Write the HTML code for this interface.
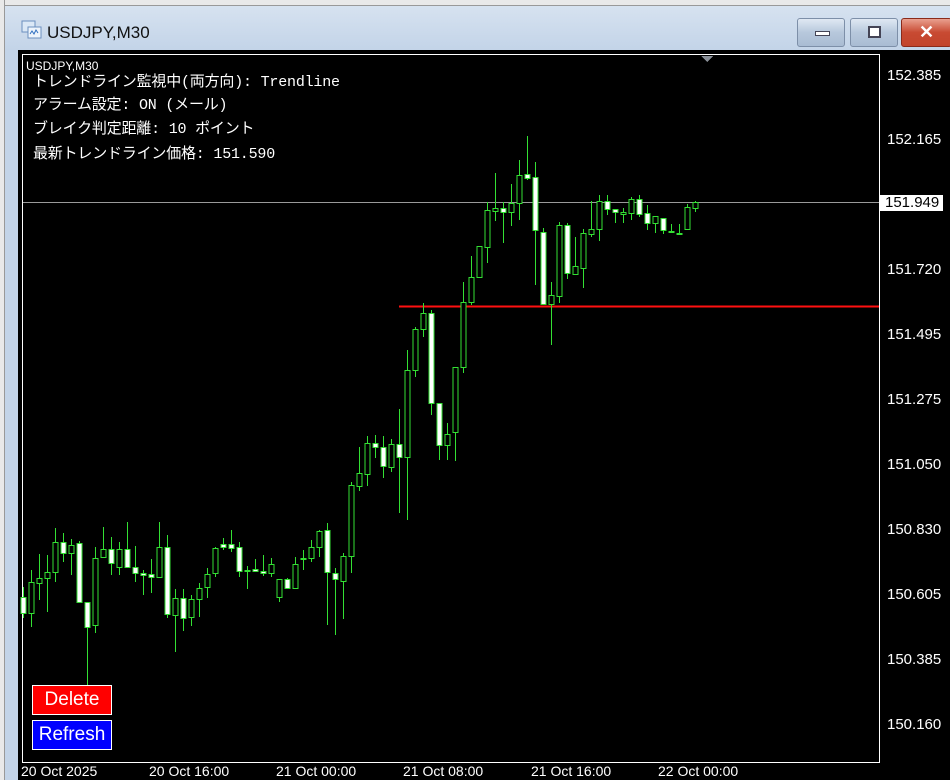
<!DOCTYPE html>
<html><head><meta charset="utf-8"><style>
body{margin:0;width:950px;height:780px;overflow:hidden;background:#fff;position:relative;font-family:"Liberation Sans","Noto Sans CJK JP",sans-serif}
.abs{position:absolute}
.btn{position:absolute;top:18px;height:27px;border:1px solid #7d8fa8;border-radius:3px;background:linear-gradient(#dfe8f3,#b7c8dc 50%,#a9bcd3)}
.pl{position:absolute;left:887px;color:#fff;font-size:15px;line-height:14px}
.tl{position:absolute;top:764px;color:#fff;font-size:14px;line-height:15px}
.info{position:absolute;left:33px;color:#fff;font-size:15px;line-height:16px;font-family:"Liberation Mono","Noto Sans CJK JP",monospace;letter-spacing:-0.2px}
</style></head><body>
<div class="abs" style="left:0;top:0;width:950px;height:780px;background:linear-gradient(#d9e4f1,#c3d4e8 50px);"></div>
<div class="abs" style="left:0;top:0;width:950px;height:5px;background:#e9e9e9;border-bottom:1px solid #999"></div>
<div class="abs" style="left:0;top:0;width:4px;height:780px;background:#e9e9e9;border-right:1px solid #999"></div>
<svg class="abs" style="left:21px;top:20px" width="22" height="20"><rect x="1" y="1" width="13" height="11" fill="#dbe8f6" stroke="#6b8fbf"/><rect x="7" y="7" width="13" height="11" fill="#eef4fb" stroke="#6b8fbf"/><path d="M9 14l2-3 2 3 2-4 2 3" stroke="#2f6fc0" fill="none"/></svg>
<div class="abs" style="left:47px;top:23px;font-size:17px;color:#111">USDJPY,M30</div>
<div class="btn" style="left:797px;width:46px"><div class="abs" style="left:17px;top:12px;width:13px;height:3px;background:#fff;border:1px solid #445"></div></div>
<div class="btn" style="left:850px;width:46px"><div class="abs" style="left:17px;top:7px;width:9px;height:8px;border:2px solid #445;background:#fff"></div></div>
<div class="btn" style="left:901px;width:49px;background:linear-gradient(#e9a08f,#c84a32 50%,#c2442c);border-color:#8a2a1a;color:#fff;font-weight:bold;font-size:18px;text-align:center;line-height:27px">✕</div>
<div class="abs" style="left:18px;top:50px;width:932px;height:730px;background:#000"></div>
<div class="abs" style="left:22px;top:54px;width:856px;height:707px;border:1px solid #fff"></div>
<svg class="abs" style="left:0;top:0" width="950" height="780" id="ch" shape-rendering="crispEdges">
<line x1="23" y1="202.5" x2="879" y2="202.5" stroke="#9a9a9a"/>
<line x1="399" y1="306.5" x2="879" y2="306.5" stroke="#ff1010" stroke-width="2"/>
<polygon points="701,56 713,56 707,62" fill="#8a9098"/>
</svg>
<div class="abs" style="left:880px;top:195px;width:63px;height:16px;background:#fff"></div>
<div class="pl" style="top:69px">152.385</div>
<div class="pl" style="top:133px">152.165</div>
<div class="pl" style="top:196px;color:#000;left:885px">151.949</div>
<div class="pl" style="top:263px">151.720</div>
<div class="pl" style="top:328px">151.495</div>
<div class="pl" style="top:393px">151.275</div>
<div class="pl" style="top:458px">151.050</div>
<div class="pl" style="top:523px">150.830</div>
<div class="pl" style="top:588px">150.605</div>
<div class="pl" style="top:653px">150.385</div>
<div class="pl" style="top:718px">150.160</div>
<div class="tl" style="left:21px">20 Oct 2025</div>
<div class="tl" style="left:149px">20 Oct 16:00</div>
<div class="tl" style="left:276px">21 Oct 00:00</div>
<div class="tl" style="left:403px">21 Oct 08:00</div>
<div class="tl" style="left:531px">21 Oct 16:00</div>
<div class="tl" style="left:658px">22 Oct 00:00</div>
<div class="abs" style="left:26px;top:59px;color:#fff;font-size:12px">USDJPY,M30</div>
<div class="info" style="top:75px">トレンドライン監視中(両方向): Trendline</div>
<div class="info" style="top:98px">アラーム設定: ON (メール)</div>
<div class="info" style="top:122px">ブレイク判定距離: 10 ポイント</div>
<div class="info" style="top:147px">最新トレンドライン価格: 151.590</div>
<div class="abs" style="left:32px;top:685px;width:78px;height:28px;background:#f00;border:1px solid #fff;color:#fff;font-size:19px;text-align:center;line-height:28px">Delete</div>
<div class="abs" style="left:32px;top:720px;width:78px;height:28px;background:#00f;border:1px solid #fff;color:#fff;font-size:19px;text-align:center;line-height:28px">Refresh</div>
<script>
var d=[[597,613,587,618,1],[582,613,570,627,0],[578,583,554,600,0],[572,578,555,612,0],[542,572,528,582,0],[542,553,533,562,1],[545,553,539,575,0],[543,602,541,603,1],[602,627,602,685,1],[558,625,547,633,0],[549,557,527,558,0],[549,563,537,575,1],[549,567,542,575,0],[549,567,522,568,1],[567,573,546,582,1],[573,575,570,595,1],[574,577,559,593,1],[547,577,522,577,0],[547,614,535,618,1],[598,615,589,652,0],[598,618,589,631,1],[599,617,595,626,0],[588,599,583,617,0],[574,587,568,598,0],[548,573,547,577,0],[544,547,538,550,1],[544,548,530,552,1],[547,571,542,577,1],[570,571,566,589,0],[569,571,559,572,1],[571,573,555,576,1],[564,573,558,577,0],[579,597,579,602,0],[579,588,578,589,1],[564,588,557,588,0],[558,559,550,570,0],[547,558,540,562,0],[531,547,530,557,0],[530,572,523,625,1],[573,579,568,635,1],[556,581,553,619,0],[485,556,482,573,0],[473,486,447,491,0],[443,474,436,486,0],[443,447,435,458,1],[447,466,436,478,1],[444,467,439,472,0],[444,457,409,513,1],[370,457,350,520,0],[329,370,327,377,0],[313,329,303,337,0],[313,403,310,415,1],[403,445,403,460,1],[434,445,423,460,0],[367,432,367,461,0],[302,367,282,373,0],[277,302,256,305,0],[246,277,246,278,0],[210,247,202,263,0],[208,211,173,221,0],[208,212,202,243,1],[203,212,184,226,0],[175,203,160,220,0],[174,178,136,180,1],[177,230,162,285,1],[232,304,228,305,1],[295,304,282,345,0],[225,296,222,303,0],[225,273,223,279,1],[266,274,237,274,0],[233,268,229,288,0],[229,234,201,237,0],[201,229,195,241,0],[201,209,195,215,1],[209,212,209,223,1],[212,214,208,223,0],[199,213,197,220,0],[199,214,195,217,1],[213,223,205,230,1],[216,223,216,233,0],[218,230,218,234,1],[231,232,224,232,0],[233,234,224,235,0],[207,229,204,229,0],[202,208,201,212,0]];
var s='',G='#33e033';
d.forEach(function(c,i){var x=Math.round(22.7+8*i)+0.5;
s+='<line x1="'+x+'" y1="'+c[2]+'" x2="'+x+'" y2="'+c[3]+'" stroke="'+G+'"/>';
var h=Math.max(c[1]-c[0],1);
s+='<rect x="'+(x-2.5)+'" y="'+(c[0]+0.5)+'" width="5" height="'+h+'" fill="'+(c[4]?'#fff':'#000')+'" stroke="'+G+'"/>';});
document.getElementById('ch').insertAdjacentHTML('beforeend',s);
</script>
</body></html>
